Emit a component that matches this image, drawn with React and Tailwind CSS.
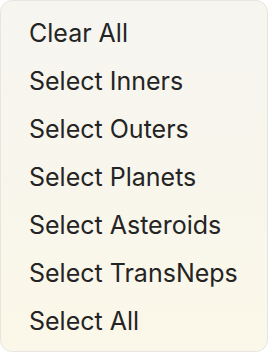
const items = [
  'Clear All',
  'Select Inners',
  'Select Outers',
  'Select Planets',
  'Select Asteroids',
  'Select TransNeps',
  'Select All',
];

export default function App() {
  return (
    <div className="w-[268px] h-[352px] bg-white">
      <div
        className="w-full h-full rounded-[12px] border border-[#e6e5e0] bg-gradient-to-b from-[#f6f5f0] via-[#f8f6ec] to-[#fbf8e9] pt-[8px] pb-[6px] flex flex-col"
        style={{ fontFamily: 'Inter, "Liberation Sans", sans-serif' }}
      >
        {items.map((label) => (
          <div
            key={label}
            className="h-[48px] flex items-center pl-[28px] text-[25px] text-[#242424] leading-none"
          >
            {label}
          </div>
        ))}
      </div>
    </div>
  );
}
